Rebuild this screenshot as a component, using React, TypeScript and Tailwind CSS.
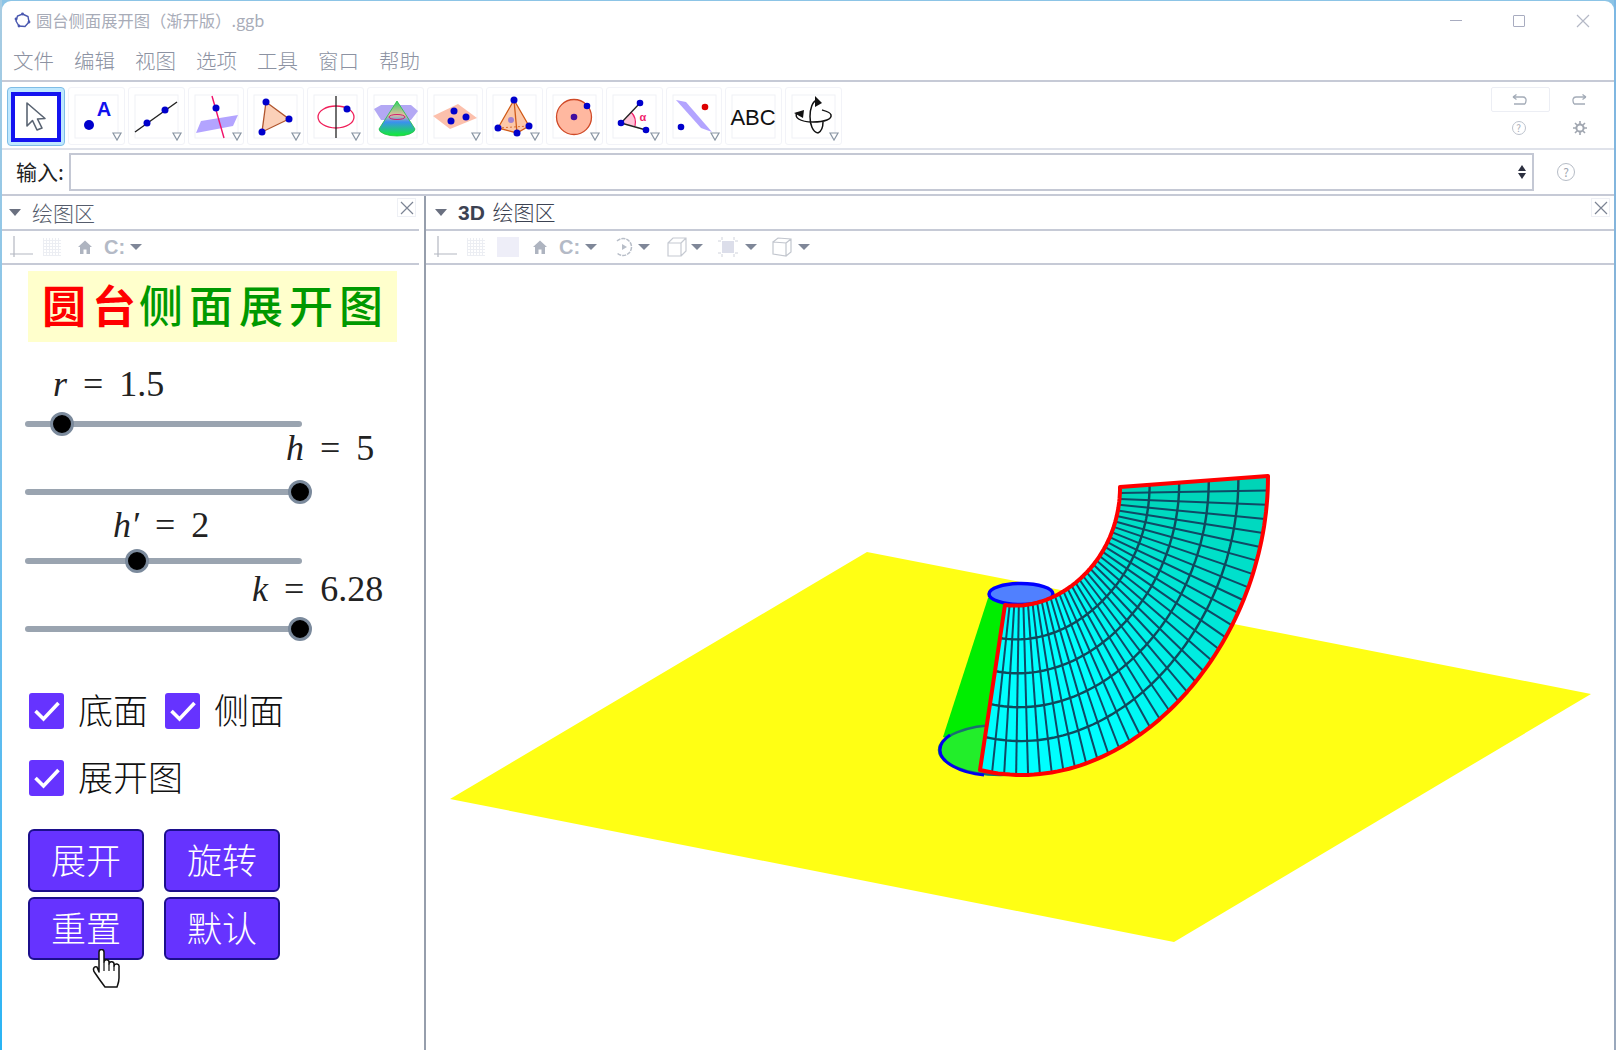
import React from "react";

const menus = ["文件", "编辑", "视图", "选项", "工具", "窗口", "帮助"];

type Pt = [number, number];

const bez = (p: Pt[], t: number): Pt => {
  const u = 1 - t;
  const a = u * u * u, b = 3 * u * u * t, c = 3 * u * t * t, d = t * t * t;
  return [a * p[0][0] + b * p[1][0] + c * p[2][0] + d * p[3][0], a * p[0][1] + b * p[1][1] + c * p[2][1] + d * p[3][1]];
};

const innerArc: Pt[] = [[1005, 605], [1060, 612], [1120, 560], [1120, 487]];
const outerArc: Pt[] = [[980, 770], [1125, 805], [1268, 650], [1268, 476]];
const COLS = 36;
const ROWS = 5;

const at = (t: number, s: number): Pt => {
  const a = bez(innerArc, t);
  const b = bez(outerArc, t);
  return [a[0] + (b[0] - a[0]) * s, a[1] + (b[1] - a[1]) * s];
};
const str = (pts: Pt[]) => pts.map((q) => q[0].toFixed(1) + "," + q[1].toFixed(1)).join(" ");
const curve = (s: number) => Array.from({ length: 73 }, (_, i) => at(i / 72, s));

function Scene() {
  const strips = Array.from({ length: COLS }, (_, i) => {
    const t0 = i / COLS;
    const t1 = (i + 1) / COLS;
    const m = Math.max(0, (t0 - 0.3) / 0.7);
    const fill = `rgb(0,${Math.round(255 - 45 * m)},${Math.round(255 - 75 * m)})`;
    return <polygon key={i} points={str([at(t0, 0), at(t0, 1), at(t1, 1), at(t1, 0)])} fill={fill} stroke={fill} strokeWidth="0.5" />;
  });
  const edge = [...curve(0), ...curve(1).reverse()];
  return (
    <svg className="absolute left-0 top-0 w-full h-full" viewBox="426 265 1188 785">
      <polygon points="867,552 1591,694 1174,942 450,799" fill="#ffff14" />
      <polygon points="988,598 943,737 1020,760 1020,600" fill="#00ee00" />
      <ellipse cx="1000" cy="750" rx="61" ry="25" fill="#22ee2a" stroke="#1a6f70" strokeWidth="2.5" />
      <path d="M984 775 C960 773 940 762 940 750 C940 744 944 739 950 735" fill="none" stroke="#0000ee" strokeWidth="3" />
      <ellipse cx="1021" cy="594" rx="32" ry="10.5" fill="#5080ff" stroke="#0000ff" strokeWidth="3.5" />
      {strips}
      {Array.from({ length: COLS - 1 }, (_, i) => {
        const t = (i + 1) / COLS;
        const a = at(t, 0);
        const b = at(t, 1);
        return <line key={i} x1={a[0]} y1={a[1]} x2={b[0]} y2={b[1]} stroke="#0f4a66" strokeWidth="2" />;
      })}
      {Array.from({ length: ROWS - 1 }, (_, i) => (
        <polyline key={i} points={str(curve((i + 1) / ROWS))} fill="none" stroke="#0f4a5c" strokeWidth="2.4" />
      ))}
      <polygon points={str(edge)} fill="none" stroke="#ff0000" strokeWidth="4" strokeLinejoin="round" />
    </svg>
  );
}

function Mark() {
  return <polygon points="45,46 53,46 49,53" fill="#fff" stroke="#8a96a4" strokeWidth="1.2" />;
}

function Tool({ children, mark = true }: { children: React.ReactNode; mark?: boolean }) {
  return (
    <div className="w-[56.75px] h-[58px] border border-[#f2f3f8] rounded-[3px] shrink-0">
      <svg width="55" height="56" viewBox="1 1 55 56">
        <rect x="7" y="8" width="43" height="43" fill="none" stroke="#f0f1f6" />
        {children}
        {mark && <Mark />}
      </svg>
    </div>
  );
}

const B = "#0000cc";

function Toolbar() {
  return (
    <div className="flex gap-[3px] items-start pl-[5px] pt-[5px]">
      <div className="w-[58px] h-[59px] shrink-0 bg-[#bfe8ff] border border-[#7fbde6] rounded-[4px] flex items-center justify-center">
        <div className="w-[50px] h-[50px] bg-white border-[4px] border-[#1414f0] flex items-center justify-center">
          <svg width="24" height="32" viewBox="0 0 24 32">
            <path d="M3 2 V25 L8.5 19.5 L13 29 L18 27 L13.5 18 L21 17.5 Z" fill="#fff" stroke="#5a6472" strokeWidth="1.6" strokeLinejoin="round" />
          </svg>
        </div>
      </div>
      <Tool>
        <circle cx="21" cy="38" r="5" fill={B} />
        <text x="36" y="29" textAnchor="middle" fontSize="20" fontWeight="700" fill="#1111ee" fontFamily="Liberation Sans">A</text>
      </Tool>
      <Tool>
        <line x1="7" y1="45" x2="49" y2="15" stroke="#222" strokeWidth="1.4" />
        <circle cx="19" cy="36" r="3.5" fill={B} />
        <circle cx="37" cy="23" r="3.5" fill={B} />
      </Tool>
      <Tool>
        <polygon points="8,46 13,34 50,28 45,39" fill="#b3a4ff" />
        <line x1="24" y1="9" x2="36" y2="51" stroke="#f0106a" strokeWidth="1.4" />
        <circle cx="28" cy="21" r="3.5" fill={B} />
      </Tool>
      <Tool>
        <polygon points="19,15 42,32 15,45" fill="#fbd0b8" stroke="#b0562f" strokeWidth="1.3" />
        <circle cx="19" cy="15" r="3.5" fill={B} />
        <circle cx="42" cy="32" r="3.5" fill={B} />
        <circle cx="15" cy="45" r="3.5" fill={B} />
      </Tool>
      <Tool>
        <ellipse cx="29" cy="30" rx="18" ry="11" fill="none" stroke="#f0205a" strokeWidth="1.3" />
        <line x1="29" y1="9" x2="29" y2="51" stroke="#222" strokeWidth="1.3" />
        <circle cx="40" cy="22" r="3.5" fill={B} />
      </Tool>
      <Tool mark={false}>
        <defs>
          <linearGradient id="cone" x1="0" y1="0" x2="0" y2="1">
            <stop offset="0" stopColor="#30d060" />
            <stop offset="0.4" stopColor="#e0c0a0" />
            <stop offset="0.6" stopColor="#3a90f0" />
            <stop offset="1" stopColor="#10ee30" />
          </linearGradient>
        </defs>
        <polygon points="7,22 14,18 44,18 51,24 44,33 14,33" fill="#b3a8f4" />
        <path d="M30 14 L12 42 A18 7 0 0 0 48 42 Z" fill="url(#cone)" stroke="#20c040" strokeWidth="0.8" />
        <ellipse cx="30" cy="30" rx="8" ry="2.5" fill="none" stroke="#d02070" strokeWidth="1" />
      </Tool>
      <Tool>
        <polygon points="6,29 31,17 50,31 23,42" fill="#fcc0ac" />
        <circle cx="27" cy="24" r="3.5" fill={B} />
        <circle cx="39" cy="30" r="3.5" fill={B} />
        <circle cx="24" cy="34" r="3.5" fill={B} />
      </Tool>
      <Tool>
        <polygon points="28,13 12,41 31,46 43,39" fill="#fcc8a8" stroke="#d05a18" strokeWidth="1.3" />
        <line x1="28" y1="13" x2="31" y2="46" stroke="#d05a18" strokeWidth="1.3" />
        <line x1="12" y1="41" x2="43" y2="39" stroke="#d05a18" strokeWidth="0.8" strokeDasharray="2 2" />
        <circle cx="25" cy="33" r="3" fill="#a080d0" />
        <circle cx="28" cy="13" r="3.5" fill={B} />
        <circle cx="12" cy="41" r="3.5" fill={B} />
        <circle cx="43" cy="39" r="3.5" fill={B} />
        <circle cx="31" cy="46" r="3.5" fill={B} />
      </Tool>
      <Tool>
        <circle cx="28" cy="30" r="17.5" fill="#ffb8a0" stroke="#d04a28" strokeWidth="1.3" />
        <circle cx="28" cy="30" r="3.3" fill="#400fa0" />
        <circle cx="41" cy="19" r="3.3" fill={B} />
      </Tool>
      <Tool>
        <path d="M15 36 L25 25 A15 15 0 0 1 29 39 Z" fill="#ffc4d8" />
        <path d="M25 25 A15 15 0 0 1 29 39" fill="none" stroke="#f0206a" strokeWidth="1.2" />
        <line x1="15" y1="36" x2="34" y2="16" stroke="#222" strokeWidth="1.3" />
        <line x1="15" y1="36" x2="40" y2="43" stroke="#222" strokeWidth="1.3" />
        <circle cx="15" cy="36" r="3.3" fill={B} />
        <circle cx="34" cy="16" r="3.3" fill={B} />
        <circle cx="40" cy="43" r="3.3" fill={B} />
        <text x="37" y="34" textAnchor="middle" fontSize="11" fontWeight="700" fill="#f0206a" fontFamily="Liberation Sans">α</text>
      </Tool>
      <Tool>
        <path d="M10 13 L20 15 L46 45 L35 41 Z" fill="#b3a4ff" />
        <circle cx="39" cy="20" r="3.3" fill="#dd0000" />
        <circle cx="15" cy="40" r="3.3" fill={B} />
      </Tool>
      <Tool mark={false}>
        <text x="28" y="38" textAnchor="middle" fontSize="22" fill="#111" fontFamily="Liberation Sans">ABC</text>
      </Tool>
      <Tool>
        <path d="M12 26 C9 30 14 35 28 35 C40 35 47 32 46 28 C45.5 25 41 24 37 23" fill="none" stroke="#111" strokeWidth="1.5" />
        <path d="M32 13 C23 15 22 44 33 46" fill="none" stroke="#111" strokeWidth="1.5" />
        <path d="M33 46 C37 44 38 38 38 35" fill="none" stroke="#111" strokeWidth="1.5" />
        <polygon points="9,26 19,23 18,31" fill="#111" />
        <polygon points="30,9 37,16 30,20" fill="#111" />
      </Tool>
    </div>
  );
}

const G = "#aeb4c0";

function Axes() {
  return (
    <svg width="24" height="24" viewBox="0 0 24 24" className="shrink-0">
      <path d="M4 1 V22 M0 19 H23" fill="none" stroke="#b4b8c2" strokeWidth="1.2" />
    </svg>
  );
}

function GridIcon() {
  return (
    <div className="w-[18px] h-[18px] shrink-0 bg-[repeating-linear-gradient(0deg,#eceef3_0_1px,transparent_1px_3px),repeating-linear-gradient(90deg,#eceef3_0_1px,transparent_1px_3px)]" />
  );
}

function HomeIcon() {
  return (
    <svg width="14" height="14" viewBox="0 0 14 14" className="shrink-0">
      <path d="M7 0.5 L14 7 H12 V14 H8.5 V9.5 H5.5 V14 H2 V7 H0 Z" fill={G} />
    </svg>
  );
}

function Caret() {
  return <div className="w-0 h-0 shrink-0 border-x-[6px] border-x-transparent border-t-[6px] border-t-[#7f8798]" />;
}

function Cmark() {
  return <span className="shrink-0 w-[21px] text-[20px] leading-none font-black text-[#b4bac6] font-['Liberation_Sans',sans-serif]">C:</span>;
}

function WinClose({ size = 14, color = "#b4b8c6" }: { size?: number; color?: string }) {
  return (
    <svg width={size} height={size} viewBox="0 0 14 14" className="shrink-0">
      <path d="M1 1 L13 13 M13 1 L1 13" stroke={color} strokeWidth="1.2" fill="none" />
    </svg>
  );
}

function PanelClose() {
  return (
    <div className="w-[19px] h-[19px] border border-[#eef0f5] flex items-center justify-center">
      <WinClose size={14} color="#7c8494" />
    </div>
  );
}

function HeaderCaret() {
  return <div className="w-0 h-0 border-x-[6px] border-x-transparent border-t-[7px] border-t-[#6a7080]" />;
}

function Slider({ label, pl, pb, rowH, pos }: { label: React.ReactNode; pl: number; pb: number; rowH: number; pos: number }) {
  return (
    <div>
      <div className="flex items-end font-['Liberation_Serif',serif] text-[36px] leading-[36px] text-[#222] [word-spacing:7px]" style={{ height: rowH, paddingLeft: pl, paddingBottom: pb }}>
        <span className="whitespace-nowrap">{label}</span>
      </div>
      <div className="relative h-6 ml-[25px] w-[277px]">
        <div className="absolute left-0 right-0 top-[9px] h-[6px] rounded-full bg-[#9aa4b0]" />
        <div className="absolute top-0 w-6 h-6 rounded-full bg-black border-[3px] border-[#7b8a9c]" style={{ left: pos }} />
      </div>
    </div>
  );
}

function Check({ text }: { text: string }) {
  return (
    <div className="flex items-center h-[36px]">
      <div className="w-[35px] h-[36px] rounded-[3px] bg-[#6633ff] flex items-center justify-center">
        <svg width="28" height="22" viewBox="0 0 28 22">
          <path d="M2.5 11 L10.5 19 L25.5 3" fill="none" stroke="#fff" strokeWidth="3.6" />
        </svg>
      </div>
      <span className="ml-[14px] pb-[6px] text-[35px] leading-none font-light text-[#111]">{text}</span>
    </div>
  );
}

function Btn({ text }: { text: string }) {
  return (
    <div className="h-[63px] pb-[4px] rounded-[6px] bg-[#6633ff] border-2 border-[#1c0f8c] flex items-center justify-center text-white text-[35px] font-light leading-none">
      {text}
    </div>
  );
}

export default function App() {
  return (
    <div className="w-[1616px] h-[1050px] bg-[#8cc4e6] flex font-['Noto_Sans_CJK_SC',sans-serif] overflow-hidden">
      <div className="w-[2px] shrink-0 bg-gradient-to-b from-[#a8cce2] to-[#28b4f4]" />
      <div className="flex-1 min-w-0 mt-px bg-white rounded-t-[9px] flex flex-col overflow-hidden">
        {/* title bar */}
        <div className="h-[39px] shrink-0 flex items-center pl-[12px] pr-[24px]">
          <svg width="17" height="17" viewBox="0 0 17 17" className="shrink-0">
            <path d="M8.5 2 L14 4.5 L15 10 L11 14.5 L5 14 L2 9 L3.5 4 Z" fill="none" stroke="#4a58b0" strokeWidth="1.4" />
            <circle cx="8.5" cy="2" r="1.4" fill="#4a58b0" />
            <circle cx="15" cy="10" r="1.4" fill="#4a58b0" />
            <circle cx="5" cy="14" r="1.4" fill="#4a58b0" />
            <circle cx="2" cy="7" r="1.4" fill="#4a58b0" />
          </svg>
          <span className="ml-[5px] text-[16.3px] text-[#a8acb8]">圆台侧面展开图（渐开版）.ggb</span>
          <div className="ml-auto flex items-center gap-[51px]">
            <div className="w-[12px] h-px bg-[#a8acc0]" />
            <div className="w-[12px] h-[12px] border border-[#a8acc0] rounded-[1px]" />
            <WinClose />
          </div>
        </div>
        {/* menu */}
        <div className="h-[42px] shrink-0 flex items-center gap-[20px] pl-[11px] border-b-2 border-[#c6cad6] text-[20.5px] font-light text-[#8c92a2]">
          {menus.map((m) => (
            <span key={m}>{m}</span>
          ))}
        </div>
        {/* tools */}
        <div className="h-[68px] shrink-0 flex border-b-2 border-[#dfe2ea]">
          <Toolbar />
          <div className="ml-auto mr-[5px] w-[118px] grid grid-cols-[59px_59px] grid-rows-[25px_31px] pt-[5px]">
            <div className="flex items-center justify-center pr-[4px] border border-[#eceef4] rounded-[2px]">
              <svg width="16" height="12" viewBox="0 0 16 12">
                <path d="M14 10 H3 M14 10 C16 6 15 3 12 3 H2 M2 3 L5.5 0.5 M2 3 L5.5 5.5" fill="none" stroke="#a4acb8" strokeWidth="1.3" />
              </svg>
            </div>
            <div className="flex items-center justify-center">
              <svg width="16" height="12" viewBox="0 0 16 12">
                <path d="M2 10 H13 M2 10 C0 6 1 3 4 3 H14 M14 3 L10.5 0.5 M14 3 L10.5 5.5" fill="none" stroke="#a4acb8" strokeWidth="1.3" />
              </svg>
            </div>
            <div className="flex items-center justify-center pr-[4px]">
              <div className="w-[14px] h-[14px] rounded-full border border-[#bcc2cc] text-[10px] leading-[12px] text-center text-[#a8aeb8]">?</div>
            </div>
            <div className="flex items-center justify-center">
              <svg width="14" height="14" viewBox="0 0 14 14">
                <circle cx="7" cy="7" r="3.6" fill="none" stroke="#a0a6b0" strokeWidth="2" />
                <path d="M7 0 V3 M7 11 V14 M0 7 H3 M11 7 H14 M2 2 L4 4 M10 10 L12 12 M12 2 L10 4 M4 10 L2 12" stroke="#a0a6b0" strokeWidth="1.6" />
              </svg>
            </div>
          </div>
        </div>
        {/* input */}
        <div className="h-[46px] shrink-0 flex items-center pl-[14px] border-b-2 border-[#c6cad6]">
          <span className="w-[53px] text-[21px] text-[#222] whitespace-nowrap">输入:</span>
          <div className="w-[1465px] h-[38px] border-2 border-[#c4c8d4] flex items-center justify-end pr-[6px]">
            <div className="flex flex-col gap-[2px]">
              <div className="w-0 h-0 border-x-[4px] border-x-transparent border-b-[6px] border-b-[#2c3040]" />
              <div className="w-0 h-0 border-x-[4px] border-x-transparent border-t-[6px] border-t-[#2c3040]" />
            </div>
          </div>
          <div className="ml-[23px] w-[18px] h-[18px] rounded-full border-[1.5px] border-[#b6bcc6] text-[12px] leading-[15px] text-center text-[#a0a6b0]">?</div>
        </div>
        {/* panels */}
        <div className="flex-1 flex min-h-0">
          <div className="w-[424px] shrink-0 border-r-2 border-[#969eac] flex flex-col">
            <div className="h-[35px] shrink-0 flex items-center pl-[7px] pr-[3px] mr-[5px] border-b-2 border-[#c6cad6]">
              <HeaderCaret />
              <span className="ml-[11px] text-[21px] font-light text-[#555c6c]">绘图区</span>
              <div className="ml-auto -mt-[10px]">
                <PanelClose />
              </div>
            </div>
            <div className="h-[34px] shrink-0 flex items-center pl-[8px] mr-[5px] border-b-2 border-[#c6cad6]">
              <Axes />
              <div className="ml-[9px]"><GridIcon /></div>
              <div className="ml-[17px]"><HomeIcon /></div>
              <div className="ml-[12px]"><Cmark /></div>
              <div className="ml-[5px]"><Caret /></div>
            </div>
            <div className="relative flex-1">
              <div className="mt-[6px] ml-[26px] w-[369px] h-[71px] bg-[#ffffcc] flex items-center pl-[14px] pb-[5px] text-[44px] leading-none tracking-[6px] whitespace-nowrap font-medium">
                <span className="text-[#ff0000] font-bold">圆台</span>
                <span className="text-[#009900] -ml-[3px]">侧面展开图</span>
              </div>
              <div className="-ml-[2px]">
                <Slider pl={53} pb={10} rowH={70} pos={25} label={<><i>r</i> = 1.5</>} />
                <Slider pl={286} pb={14} rowH={44} pos={263} label={<><i>h</i> = 5</>} />
                <Slider pl={113} pb={6} rowH={45} pos={100} label={<><i>h′</i> = 2</>} />
                <Slider pl={252} pb={10} rowH={44} pos={263} label={<><i>k</i> = 6.28</>} />
              </div>
              <div className="ml-[27px] mt-[52px]">
                <div className="flex gap-[17px]">
                  <Check text="底面" />
                  <Check text="侧面" />
                </div>
                <div className="mt-[31px]">
                  <Check text="展开图" />
                </div>
                <div className="mt-[33px] -ml-[1px] grid grid-cols-[116px_116px] gap-x-[20px] gap-y-[5px]">
                  <Btn text="展开" />
                  <Btn text="旋转" />
                  <Btn text="重置" />
                  <Btn text="默认" />
                </div>
              </div>
              {/* mouse pointer over the reset button */}
              <svg className="absolute left-[90px] top-[684px]" width="29" height="39" viewBox="0 0 29 39">
                <path d="M7 23 V3 a2.5 2.5 0 0 1 5 0 V13 a2.5 2.5 0 0 1 5 0.5 V15 a2.5 2.5 0 0 1 5 0.5 V17 a2.5 2.5 0 0 1 5 1 V29 c0 4 -1 6 -2 9 H13 c-3 -4 -6 -8 -10 -14 c-3 -4 -1 -7 2 -6 Z" fill="#fff" stroke="#111" strokeWidth="1.5" strokeLinejoin="round" />
                <path d="M12 13 V22 M17 15 V22 M22 17 V22" stroke="#111" strokeWidth="1.2" fill="none" />
              </svg>
            </div>
          </div>
          <div className="flex-1 min-w-0 flex flex-col">
            <div className="h-[35px] shrink-0 flex items-center pl-[9px] pr-[4px] border-b-2 border-[#c6cad6]">
              <HeaderCaret />
              <span className="ml-[11px] text-[21px] text-[#3c4252] [word-spacing:3px]"><b className="font-bold font-['Liberation_Sans',sans-serif]">3D</b> <span className="font-light">绘图区</span></span>
              <div className="ml-auto -mt-[10px]">
                <PanelClose />
              </div>
            </div>
            <div className="h-[34px] shrink-0 flex items-center pl-[8px] border-b-2 border-[#c6cad6]">
              <Axes />
              <div className="ml-[9px]"><GridIcon /></div>
              <div className="ml-[12px] w-[22px] h-[20px] bg-[#eeeef8]" />
              <div className="ml-[14px]"><HomeIcon /></div>
              <div className="ml-[12px]"><Cmark /></div>
              <div className="ml-[5px]"><Caret /></div>
              <svg width="20" height="22" viewBox="0 0 20 22" className="ml-[17px] shrink-0">
                <path d="M3 5 A8.5 8.5 0 1 1 3 17" fill="none" stroke="#b8bec8" strokeWidth="1.5" strokeDasharray="4 1" />
                <polygon points="8,8 8,14 13,11" fill="#b8bec8" />
              </svg>
              <div className="ml-[4px]"><Caret /></div>
              <svg width="20" height="20" viewBox="0 0 20 20" className="ml-[17px] shrink-0">
                <path d="M1 6 H14 V19 H1 Z M1 6 L6 1 H19 V14 L14 19 M14 6 L19 1" fill="none" stroke="#c6cad2" strokeWidth="1.2" />
              </svg>
              <div className="ml-[4px]"><Caret /></div>
              <svg width="20" height="20" viewBox="0 0 20 20" className="ml-[15px] shrink-0">
                <rect x="4" y="4" width="12" height="12" fill="#dcdeea" />
                <path d="M0 4 H3 M4 0 V3 M16 0 V3 M17 4 H20 M0 16 H3 M4 17 V20 M16 17 V20 M17 16 H20" stroke="#d0d3dc" />
              </svg>
              <div className="ml-[7px]"><Caret /></div>
              <svg width="20" height="20" viewBox="0 0 20 20" className="ml-[15px] shrink-0">
                <path d="M1 5 L14 6 V19 L1 17 Z M1 5 L6 1 L19 2 V15 L14 19 M14 6 L19 2" fill="none" stroke="#c2c6ce" strokeWidth="1.2" />
              </svg>
              <div className="ml-[6px]"><Caret /></div>
            </div>
            <div className="relative flex-1 bg-white">
              <Scene />
            </div>
          </div>
        </div>
      </div>
      <div className="w-[2px] shrink-0 bg-gradient-to-b from-[#7cb8e4] to-[#9aa8bc]" />
    </div>
  );
}
